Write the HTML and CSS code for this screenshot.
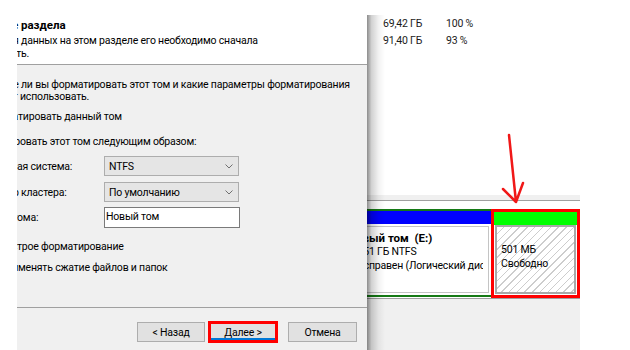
FILE: index.html
```html
<!DOCTYPE html>
<html lang="ru">
<head>
  <meta charset="UTF-8" />
  <meta name="viewport" content="width=device-width, initial-scale=1.0"/>
  <title>Форматирование раздела</title>
  <link rel="stylesheet" href="styles.css">
</head>
<body>
  <div class="shot">

    <div class="diskmgmt">
      <div class="volumes">
        <div class="vol-row"><span class="vol-free">69,42 ГБ</span><span class="vol-pct">100 %</span></div>
        <div class="vol-row"><span class="vol-free">91,40 ГБ</span><span class="vol-pct">93 %</span></div>
      </div>
      <div class="splitter"></div>
      <div class="disk-area">
        <div class="disk-row">
          <div class="part logical">
            <div class="part-bar"></div>
            <div class="part-body">
              <div class="part-text">
                <p class="part-name"><span class="cut">Нов</span>ый том&nbsp; (E:)</p>
                <p><span class="cut">69,5</span>1 ГБ NTFS</p>
                <p><span class="cut">Ис</span>правен (Логический диск)</p>
              </div>
            </div>
          </div>
          <div class="part free">
            <div class="part-bar"></div>
            <div class="part-body">
              <p>501 МБ</p>
              <p>Свободно</p>
            </div>
          </div>
        </div>
      </div>
      <div class="statusbar"></div>
    </div>

    <svg class="arrow" width="36" height="80" viewBox="0 0 36 80">
      <path d="M12 5 L19 72 M6 59 L19 72 L26 53" fill="none" stroke="#f01818" stroke-width="2.5" stroke-linecap="round" stroke-linejoin="round"/>
    </svg>

    <div class="dialog">
      <div class="wiz-head">
        <p class="wiz-title"><span class="cut">Форматирование </span>раздела</p>
        <p class="wiz-sub"><span class="cut">Для хранения </span>данных на этом разделе его необходимо сначала</p>
        <p class="wiz-sub"><span class="cut">отформатироват</span>ь.</p>
      </div>

      <div class="wiz-body">
        <p class="intro"><span class="cut">Укажите, хотите </span>ли вы форматировать этот том и какие параметры форматирования</p>
        <p class="intro"><span class="cut">следует </span>использовать.</p>

        <p class="option"><span class="cut">Не форма</span>тировать данный том</p>
        <p class="option"><span class="cut">Форматир</span>овать этот том следующим образом:</p>

        <div class="field">
          <label><span class="cut">Файлов</span>ая система:</label>
          <div class="combo"><span>NTFS</span><svg width="8" height="5" viewBox="0 0 8 5"><path d="M0.5 0.5 L4 4 L7.5 0.5" fill="none" stroke="#707070" stroke-width="1"/></svg></div>
        </div>
        <div class="field">
          <label><span class="cut">Размер </span>кластера:</label>
          <div class="combo"><span>По умолчанию</span><svg width="8" height="5" viewBox="0 0 8 5"><path d="M0.5 0.5 L4 4 L7.5 0.5" fill="none" stroke="#707070" stroke-width="1"/></svg></div>
        </div>
        <div class="field field-text">
          <label><span class="cut">Метка т</span>ома:</label>
          <div class="textbox">Новый том</div>
        </div>

        <p class="check"><span class="cut">Быс</span>трое форматирование</p>
        <p class="check check-last"><span class="cut">При</span>менять сжатие файлов и папок</p>
      </div>

      <div class="wiz-foot">
        <button class="btn">&lt; Назад</button>
        <button class="btn btn-next">Далее &gt;</button>
        <button class="btn btn-cancel">Отмена</button>
      </div>
    </div>

  </div>
</body>
</html>
```

FILE: styles.css
```css
body {
  margin: 0;
  width: 630px;
  height: 350px;
  overflow: hidden;
  background-color: #fff;
  font-family: "Segoe UI", Roboto, "Noto Sans", sans-serif;
  font-size: 10.5px;
  letter-spacing: -0.2px;
  color: #000;
}
p {
  margin: 0;
  white-space: nowrap;
}
.cut {
  display: inline-flex;
  width: 0;
  justify-content: flex-end;
  white-space: pre;
}

.shot {
  position: relative;
  margin: 15px 0 0 17px;
  width: 563px;
  height: 335px;
  overflow: hidden;
}

/* disk management window behind the dialog */
.diskmgmt {
  display: flex;
  flex-direction: column;
  height: 100%;
}
.volumes {
  height: 180px;
  padding-left: 366px;
  color: #1a1a1a;
}
.vol-row {
  display: flex;
  align-items: center;
  height: 17px;
}
.vol-free {
  width: 63px;
}
.splitter {
  height: 5px;
  background-color: #f0f0f0;
  border-bottom: 1px solid #a0a0a0;
}
.disk-area {
  height: 97px;
  background-color: #fff;
}
.disk-row {
  display: flex;
  align-items: flex-start;
  margin: 8px 0 0 300px;
}
.part-bar {
  height: 13px;
}
.part p {
  line-height: 14px;
}
.logical {
  flex: 1;
  min-width: 0;
  height: 88px;
  box-sizing: border-box;
  border-top: 2px solid #157a15;
  border-bottom: 2px solid #157a15;
}
.logical .part-bar {
  background-color: #0000ff;
}
.logical .part-body {
  height: 67px;
  margin: 2px 2px 0 0;
  padding-top: 4px;
  box-sizing: border-box;
  border-top: 1px solid #c4c4c4;
  border-right: 1px solid #c4c4c4;
  border-bottom: 1px solid #c4c4c4;
}
.part-text {
  margin-right: 5px;
  padding-left: 52px;
  overflow: hidden;
}
.part-name {
  font-weight: bold;
  font-size: 11.5px;
  letter-spacing: 0;
}
.free {
  flex: none;
  width: 89px;
  height: 89px;
  box-sizing: border-box;
  border: 3px solid #ff0000;
}
.free .part-bar {
  background-color: #00ff00;
}
.free .part-body {
  height: 69px;
  margin: 0 1px;
  padding: 16px 0 0 4px;
  box-sizing: border-box;
  border: 2px solid #a8a8a8;
  background: repeating-linear-gradient(135deg, #fff 0 4.5px, #cdcdcd 4.5px 5.5px);
}
.statusbar {
  flex: 1;
  background-color: #f0f0f0;
  border-top: 1px solid #a0a0a0;
}

.arrow {
  position: absolute;
  left: 480px;
  top: 115px;
}

/* wizard dialog */
.dialog {
  position: absolute;
  left: 0;
  top: 0;
  width: 350px;
  height: 335px;
  display: flex;
  flex-direction: column;
  background-color: #f0f0f0;
}
.dialog::after {
  content: "";
  position: absolute;
  left: 100%;
  top: 0;
  bottom: 0;
  width: 18px;
  background: linear-gradient(to right, rgba(0, 0, 0, 0.45), rgba(0, 0, 0, 0.18) 25%, rgba(0, 0, 0, 0.05) 65%, rgba(0, 0, 0, 0));
}
.wiz-head {
  height: 50px;
  padding: 4px 0 0 4px;
  box-sizing: border-box;
  background-color: #fff;
  border-bottom: 1px solid #a0a0a0;
  line-height: 13px;
}
.wiz-title {
  font-weight: bold;
  font-size: 11.5px;
  letter-spacing: 0;
  margin-bottom: 2px;
}
.wiz-body {
  flex: 1;
  padding-top: 14px;
}
.intro {
  line-height: 12px;
}
.intro:first-child {
  padding-left: 4px;
}
.intro + .intro {
  padding-left: 3px;
}
.option {
  line-height: 13px;
  margin-top: 7px;
  padding-left: 1px;
}
.option + .option {
  margin-top: 12px;
  padding-left: 3px;
}
.field {
  display: grid;
  grid-template-columns: 87px 135px;
  align-items: center;
  height: 20px;
  margin-top: 6px;
}
.option + .field {
  margin-top: 8px;
}
.field + .field label {
  padding-left: 4px;
}
.field-text {
  height: 21px;
  margin-top: 5px;
}
.field-text label {
  padding-left: 0 !important;
}
.combo {
  display: flex;
  align-items: center;
  justify-content: space-between;
  height: 20px;
  padding: 0 5px 0 4px;
  box-sizing: border-box;
  border: 1px solid #adadad;
  background-color: #e5e5e5;
}
.textbox {
  height: 21px;
  width: 136px;
  padding: 2px 0 0 1px;
  box-sizing: border-box;
  border: 1px solid #7a7a7a;
  background-color: #fff;
}
.check {
  line-height: 13px;
  margin-top: 12px;
}
.check-last {
  margin-top: 8px;
  padding-left: 1px;
}
.wiz-foot {
  height: 43px;
  display: flex;
  align-items: flex-start;
  justify-content: flex-end;
  padding: 14px 10px 0 0;
  box-sizing: border-box;
  border-top: 1px solid #a0a0a0;
}
.btn {
  width: 68px;
  height: 20px;
  padding: 0;
  font-family: inherit;
  font-size: 10.5px;
  letter-spacing: -0.2px;
  color: #000;
  background-color: #e1e1e1;
  border: 1px solid #adadad;
}
.btn-next {
  margin-left: 4px;
  outline: 3px solid #ff0000;
  outline-offset: -2px;
  box-shadow: inset 0 -3px 0 #0078d7;
}
.btn-cancel {
  width: 69px;
  margin-left: 11px;
}
```
